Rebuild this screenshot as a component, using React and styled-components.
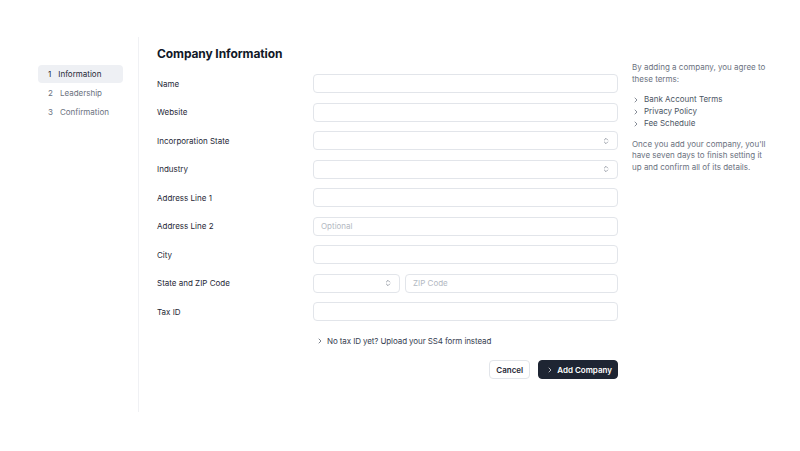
import React from "react";
import styled, { createGlobalStyle } from "styled-components";
import { ChevronRight, ChevronsUpDown } from "lucide-react";

const Global = createGlobalStyle`
    html, body {
        margin: 0;
        background: #ffffff;
        font-family: Inter, "Liberation Sans", sans-serif;
        -webkit-font-smoothing: antialiased;
    }
`;

const Page = styled.div`
    display: flex;
    width: 800px;
    height: 451px;
    padding-top: 37px;
    box-sizing: border-box;
`;

const Sidebar = styled.nav`
    width: 100px;
    padding: 28px 0 0 38px;
    display: flex;
    flex-direction: column;
    gap: 1px;
`;

const NavItem = styled.div`
    width: 85px;
    height: 18px;
    box-sizing: border-box;
    padding-left: 10px;
    display: flex;
    align-items: center;
    gap: 7px;
    border-radius: 4px;
    font-size: 8px;
    background: ${(p) => (p.$active ? "#eef0f4" : "transparent")};
    color: ${(p) => (p.$active ? "#1f2937" : "#6b7280")};
`;

const Main = styled.main`
    width: 480px;
    height: 375px;
    border-left: 1px solid #f0f1f4;
    padding: 9px 0 0 18px;
    box-sizing: border-box;
`;

const Title = styled.h1`
    margin: 0 0 12px;
    font-size: 12px;
    line-height: 16px;
    font-weight: 700;
    color: #111827;
    letter-spacing: -0.1px;
`;

const Form = styled.div`
    width: 461px;
    display: flex;
    flex-direction: column;
    gap: 9.5px;
`;

const Row = styled.div`
    display: grid;
    grid-template-columns: 156px 1fr;
    align-items: center;
    height: 19px;
`;

const Label = styled.label`
    font-size: 8px;
    color: #1f2937;
`;

const Field = styled.div`
    height: 19px;
    box-sizing: border-box;
    border: 1px solid #e2e5ea;
    border-radius: 4px;
    background: #fff;
    display: flex;
    align-items: center;
    justify-content: space-between;
    padding: 0 7px;
    font-size: 8px;
    color: #b3b9c2;
    width: ${(p) => p.$w || "auto"};
    flex: ${(p) => (p.$grow ? 1 : "none")};
`;

const Split = styled.div`
    display: flex;
    gap: 5px;
`;

const TaxLink = styled.div`
    margin: 10px 0 0 159px;
    display: flex;
    align-items: center;
    gap: 3px;
    font-size: 8px;
    letter-spacing: -0.1px;
    color: #374151;
    height: 19px;
`;

const Actions = styled.div`
    display: flex;
    justify-content: flex-end;
    gap: 8px;
    margin-top: 10px;
`;

const Button = styled.button`
    height: 19px;
    border-radius: 4px;
    font-family: inherit;
    font-size: 8px;
    font-weight: 600;
    display: flex;
    align-items: center;
    gap: 3px;
    cursor: pointer;
    border: 1px solid ${(p) => (p.$primary ? "#1e2533" : "#e2e5ea")};
    background: ${(p) => (p.$primary ? "#1e2533" : "#ffffff")};
    color: ${(p) => (p.$primary ? "#ffffff" : "#1f2937")};
    padding: ${(p) => (p.$primary ? "0 5px 0 7px" : "0 6px")};
`;

const Aside = styled.aside`
    width: 140px;
    padding: 25px 0 0 14px;
    font-size: 8px;
    line-height: 11.5px;
    color: #6b7280;
`;

const Para = styled.p`
    margin: 0;
`;

const Terms = styled.ul`
    list-style: none;
    margin: 9px 0 9px;
    padding: 0;
    display: flex;
    flex-direction: column;
    gap: 0.5px;
`;

const Term = styled.li`
    display: flex;
    align-items: center;
    gap: 4px;
    color: #4b5563;
`;

const fields = [
    { label: "Name" },
    { label: "Website" },
    { label: "Incorporation State", select: true },
    { label: "Industry", select: true },
    { label: "Address Line 1" },
    { label: "Address Line 2", placeholder: "Optional" },
    { label: "City" },
];

const Arrow = () => <ChevronRight size={8} strokeWidth={2} />;
const UpDown = () => <ChevronsUpDown size={8} strokeWidth={2} color="#6b7280" />;

export default function App() {
    return (
        <>
            <Global />
            <Page>
                <Sidebar>
                    <NavItem $active>
                        <span>1</span>Information
                    </NavItem>
                    <NavItem>
                        <span>2</span>Leadership
                    </NavItem>
                    <NavItem>
                        <span>3</span>Confirmation
                    </NavItem>
                </Sidebar>
                <Main>
                    <Title>Company Information</Title>
                    <Form>
                        {fields.map((f) => (
                            <Row key={f.label}>
                                <Label>{f.label}</Label>
                                <Field>
                                    <span>{f.placeholder}</span>
                                    {f.select && <UpDown />}
                                </Field>
                            </Row>
                        ))}
                        <Row>
                            <Label>State and ZIP Code</Label>
                            <Split>
                                <Field $w="87px">
                                    <span />
                                    <UpDown />
                                </Field>
                                <Field $grow>
                                    <span>ZIP Code</span>
                                </Field>
                            </Split>
                        </Row>
                        <Row>
                            <Label>Tax ID</Label>
                            <Field />
                        </Row>
                    </Form>
                    <TaxLink>
                        <Arrow />
                        No tax ID yet? Upload your SS4 form instead
                    </TaxLink>
                    <Actions>
                        <Button>Cancel</Button>
                        <Button $primary>
                            <Arrow />
                            Add Company
                        </Button>
                    </Actions>
                </Main>
                <Aside>
                    <Para>By adding a company, you agree to these terms:</Para>
                    <Terms>
                        <Term>
                            <Arrow />
                            Bank Account Terms
                        </Term>
                        <Term>
                            <Arrow />
                            Privacy Policy
                        </Term>
                        <Term>
                            <Arrow />
                            Fee Schedule
                        </Term>
                    </Terms>
                    <Para>
                        Once you add your company, you'll have seven days to
                        finish setting it up and confirm all of its details.
                    </Para>
                </Aside>
            </Page>
        </>
    );
}
